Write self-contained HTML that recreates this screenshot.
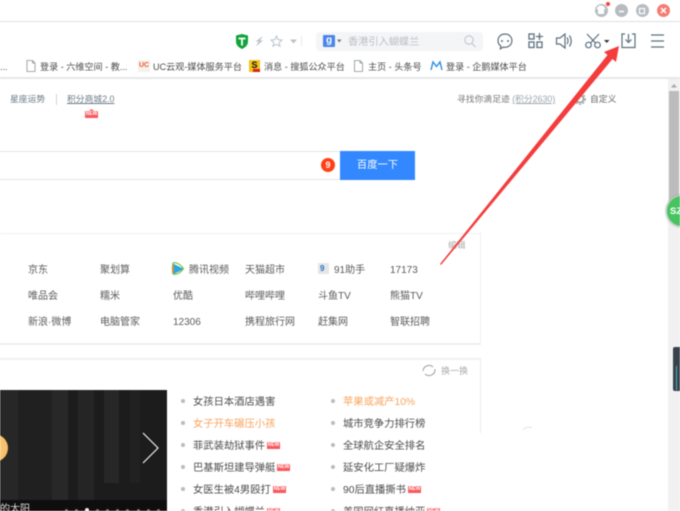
<!DOCTYPE html>
<html><head><meta charset="utf-8">
<style>
html,body{margin:0;padding:0;background:#fff}
#p{position:relative;width:680px;height:511px;overflow:hidden;background:#fff;font-family:"Liberation Sans","Noto Sans CJK SC",sans-serif;filter:blur(.45px)}
.t{position:absolute;white-space:nowrap;line-height:14px;height:14px;font-size:10px;color:#5c5c5c}
.b{font-size:9.1px;color:#4c4c4c}
.l{font-size:10.3px;color:#4c4c4c}
.l.o{color:#f9a45c}
.r{position:absolute}
.n{position:absolute;width:13px;height:7px;background:#f8585c;color:#fff;font-size:5px;line-height:7px;text-align:center;font-weight:bold}
.d{position:absolute;width:4px;height:4px;border-radius:50%;background:#bbb}
svg{position:absolute;left:0;top:0}
</style></head><body><div id="p">
<!-- chrome lines -->
<div class="r" style="left:0;top:21px;width:680px;height:1px;background:#dde0e7"></div>
<div class="r" style="left:0;top:77px;width:680px;height:2px;background:#e6e7ea"></div>
<!-- scrollbar -->
<div class="r" style="left:668px;top:79px;width:12px;height:432px;background:#f1f1f1"></div>
<div class="r" style="left:669px;top:91px;width:10px;height:112px;background:#bcbcbc"></div>
<div class="r" style="left:673px;top:347px;width:7px;height:44px;background:#39424a;border-radius:2px 0 0 2px"></div>
<div class="r" style="left:676px;top:366px;width:1px;height:24px;background:#4bb0c8"></div>
<div class="r" style="left:666px;top:195px;width:32px;height:32px;border-radius:50%;background:#47c460;border:1px solid #c9d2cb;box-sizing:border-box;box-shadow:0 0 2px #999"></div>
<div class="t" style="left:670px;top:205px;color:#fff;font-size:9.5px;font-weight:bold">SZ</div>
<!-- top window controls -->
<div class="r" style="left:595px;top:4px;width:13px;height:13px;border-radius:50%;background:#b6bcc2"></div>
<div class="r" style="left:615px;top:4px;width:13px;height:13px;border-radius:50%;background:#b6bcc2"></div>
<div class="r" style="left:636px;top:4px;width:13px;height:13px;border-radius:50%;background:#b6bcc2"></div>
<div class="r" style="left:657px;top:4px;width:13px;height:13px;border-radius:50%;background:#f47c74"></div>
<div class="r" style="left:606px;top:2px;width:4px;height:4px;border-radius:50%;background:#f4442e"></div>
<!-- search -->
<div class="r" style="left:316px;top:32px;width:167px;height:19px;border-radius:4px;background:#f3f5f7"></div>
<div class="r" style="left:323px;top:35px;width:12px;height:12px;background:#4a86e8;border-radius:1px;color:#fff;font-size:10px;line-height:12px;text-align:center;font-weight:bold">g</div>
<div class="t" style="left:348px;top:36px;color:#bcbfc3;font-size:10.2px">香港引入蝴蝶兰</div>
<!-- bookmarks -->
<div class="t b" style="left:0;top:60px">...</div>
<div class="t b" style="left:40px;top:60px">登录 - 六维空间 - 教...</div>
<div class="r" style="left:138px;top:60px;width:12px;height:12px;background:#f6f1ee;color:#e8632c;font-size:7px;line-height:12px;text-align:center;font-weight:bold">UC</div>
<div class="t b" style="left:153px;top:60px">UC云观-媒体服务平台</div>
<div class="r" style="left:249px;top:60px;width:11px;height:12px;background:#f2c418;color:#111;font-size:9px;line-height:11px;text-align:center;font-weight:bold">S</div>
<div class="r" style="left:253px;top:69px;width:7px;height:3px;background:#d9221c"></div>
<div class="t b" style="left:264px;top:60px">消息 - 搜狐公众平台</div>
<div class="t b" style="left:368px;top:60px">主页 - 头条号</div>
<div class="t b" style="left:446px;top:60px">登录 - 企鹅媒体平台</div>
<!-- header links -->
<div class="t" style="left:10px;top:92px;font-size:8.8px;color:#6b7b86">星座运势</div>
<div class="r" style="left:56px;top:94px;width:1px;height:11px;background:#d5d5d5"></div>
<div class="t" style="left:67px;top:92px;font-size:8.8px;color:#6b7b86;text-decoration:underline">积分商城2.0</div>
<div class="n" style="left:85px;top:111px">NEW</div>
<div class="t" style="left:457px;top:92px;font-size:8.8px;color:#777">寻找你滴足迹 <span style="text-decoration:underline;color:#9aa5ad">(积分2630)</span></div>
<div class="t" style="left:590px;top:92px;font-size:8.8px;color:#666">自定义</div>
<!-- search box -->
<div class="r" style="left:-2px;top:151px;width:343px;height:27px;border:1px solid #e4e4e4;box-sizing:content-box"></div>
<div class="r" style="left:321px;top:158px;width:14px;height:14px;border-radius:50%;background:#ff3f17;color:#fff;font-size:9px;line-height:14px;text-align:center;font-weight:bold">9</div>
<div class="r" style="left:340px;top:151px;width:75px;height:29px;background:#3388ff;color:#fff;font-size:10.3px;line-height:30px;text-align:center">百度一下</div>
<!-- card 1 -->
<div class="r" style="left:-2px;top:233px;width:481px;height:109px;border:1px solid #efefef;border-bottom-width:2px"></div>
<div class="t" style="left:448px;top:238px;font-size:8.8px;color:#aaa">编辑</div>
<div class="t" style="left:28px;top:264px">京东</div>
<div class="t" style="left:100px;top:264px">聚划算</div>
<div class="t" style="left:189px;top:264px">腾讯视频</div>
<div class="t" style="left:245px;top:264px">天猫超市</div>
<div class="r" style="left:318px;top:263px;width:11px;height:11px;background:#e6e6e6"></div>
<div class="t" style="left:320px;top:263px;font-size:8px;color:#2a6fc0;font-weight:bold;line-height:11px;height:11px">9</div>
<div class="t" style="left:334px;top:264px">91助手</div>
<div class="t" style="left:390px;top:264px">17173</div>
<div class="t" style="left:28px;top:290px">唯品会</div>
<div class="t" style="left:100px;top:290px">糯米</div>
<div class="t" style="left:173px;top:290px">优酷</div>
<div class="t" style="left:245px;top:290px">哔哩哔哩</div>
<div class="t" style="left:318px;top:290px">斗鱼TV</div>
<div class="t" style="left:390px;top:290px">熊猫TV</div>
<div class="t" style="left:28px;top:316px">新浪·微博</div>
<div class="t" style="left:100px;top:316px">电脑管家</div>
<div class="t" style="left:173px;top:316px">12306</div>
<div class="t" style="left:245px;top:316px">携程旅行网</div>
<div class="t" style="left:318px;top:316px">赶集网</div>
<div class="t" style="left:390px;top:316px">智联招聘</div>
<!-- card 2 -->
<div class="r" style="left:0;top:358px;width:480px;height:2px;background:#f0f0f0"></div>
<div class="r" style="left:480px;top:358px;width:1px;height:75px;background:#ececec"></div>
<div class="t" style="left:441px;top:364px;font-size:9px;color:#aaa">换一换</div>
<!-- image -->
<div class="r" style="left:0;top:390px;width:167px;height:121px;background:#1c1c1c;overflow:hidden">
<div class="r" style="left:0;top:0;width:18px;height:121px;background:#272727"></div>
<div class="r" style="left:18px;top:0;width:34px;height:121px;background:#202020"></div>
<div class="r" style="left:52px;top:0;width:16px;height:121px;background:#282828"></div>
<div class="r" style="left:78px;top:0;width:16px;height:121px;background:#252525"></div>
<div class="r" style="left:104px;top:0;width:15px;height:93px;background:#272727"></div>
<div class="r" style="left:130px;top:0;width:10px;height:93px;background:#212121"></div>
<div class="r" style="left:-20px;top:44px;width:28px;height:28px;border-radius:50%;background:radial-gradient(circle at 40% 50%,#fbd58a,#f5b658)"></div>
<div class="r" style="left:0;top:110px;width:167px;height:11px;background:#0e0e0e"></div>
</div>
<div class="t" style="left:0;top:503px;color:#ddd;font-size:10px">的太阳</div>
<div class="r" style="left:65px;top:509px;width:3px;height:3px;border-radius:50%;background:#777"></div>
<div class="r" style="left:75px;top:509px;width:3px;height:3px;border-radius:50%;background:#777"></div>
<div class="r" style="left:85px;top:508px;width:4px;height:4px;border-radius:50%;background:#eee"></div>
<div class="r" style="left:96px;top:509px;width:3px;height:3px;border-radius:50%;background:#777"></div>
<div class="r" style="left:106px;top:509px;width:3px;height:3px;border-radius:50%;background:#777"></div>
<div class="r" style="left:116px;top:509px;width:3px;height:3px;border-radius:50%;background:#777"></div>
<div class="r" style="left:126px;top:509px;width:3px;height:3px;border-radius:50%;background:#777"></div>
<div class="r" style="left:137px;top:509px;width:3px;height:3px;border-radius:50%;background:#777"></div>
<div class="r" style="left:147px;top:509px;width:3px;height:3px;border-radius:50%;background:#777"></div>
<div class="r" style="left:157px;top:509px;width:3px;height:3px;border-radius:50%;background:#777"></div>
<!-- news -->
<div class="d" style="left:181px;top:399px"></div>
<div class="d" style="left:181px;top:421px"></div>
<div class="d" style="left:181px;top:443px"></div>
<div class="d" style="left:181px;top:465px"></div>
<div class="d" style="left:181px;top:487px"></div>
<div class="d" style="left:181px;top:509px"></div>
<div class="d" style="left:331px;top:399px"></div>
<div class="d" style="left:331px;top:421px"></div>
<div class="d" style="left:331px;top:443px"></div>
<div class="d" style="left:331px;top:465px"></div>
<div class="d" style="left:331px;top:487px"></div>
<div class="d" style="left:331px;top:509px"></div>
<div class="t l" style="left:193px;top:396px">女孩日本酒店遇害</div>
<div class="t l o" style="left:193px;top:418px">女子开车碾压小孩</div>
<div class="t l" style="left:193px;top:440px">菲武装劫狱事件</div><div class="n" style="left:267px;top:442px">NEW</div>
<div class="t l" style="left:193px;top:462px">巴基斯坦建导弹艇</div><div class="n" style="left:277px;top:464px">NEW</div>
<div class="t l" style="left:193px;top:484px">女医生被4男殴打</div><div class="n" style="left:273px;top:486px">NEW</div>
<div class="t l" style="left:193px;top:506px">香港引入蝴蝶兰</div><div class="n" style="left:267px;top:508px">NEW</div>
<div class="t l o" style="left:343px;top:396px">苹果或减产10%</div>
<div class="t l" style="left:343px;top:418px">城市竞争力排行榜</div>
<div class="t l" style="left:343px;top:440px">全球航企安全排名</div>
<div class="t l" style="left:343px;top:462px">延安化工厂疑爆炸</div>
<div class="t l" style="left:343px;top:484px">90后直播撕书</div><div class="n" style="left:408px;top:486px">NEW</div>
<div class="t l" style="left:343px;top:506px">美国网红直播纳亚</div><div class="n" style="left:427px;top:508px">NEW</div>
<!-- icons and arrow -->
<svg width="680" height="511" viewBox="0 0 680 511" fill="none">
<!-- window control glyphs -->
<path d="M597.5 7l2-1.500h3l2 1.500 1 2-1.500.5V14h-6V9.500L596.500 9z" fill="#fff"/>
<path d="M619 11.500h5" stroke="#fff" stroke-width="1.500"/>
<rect x="639.500" y="8.500" width="5" height="5" stroke="#fff" stroke-width="1.200"/>
<path d="M661 8l5 5M666 8l-5 5" stroke="#fff" stroke-width="1.500"/>
<!-- shield -->
<path d="M236 35.500l6-1.500 6 1.500v6c0 4-3 6-6 7.500-3-1.500-6-3.500-6-7.500z" fill="#12a33a"/>
<path d="M238.500 38.500h7M242 38.500v7" stroke="#fff" stroke-width="1.800"/>
<!-- NEW peak -->
<path d="M89 111l2.500-2 2.500 2z" fill="#f8585c"/>
<!-- bolt, star, caret -->
<path d="M263 36l-7.500 5.500h3l-2.500 5 7-6h-3z" fill="#bcc3c8"/>
<path d="M276.500 36l1.600 3.600 3.900.4-2.900 2.500.9 3.800-3.500-2-3.500 2 .9-3.800-2.900-2.500 3.900-.4z" stroke="#bcc3c8"/>
<path d="M290 39.500h7l-3.500 4z" fill="#bcc3c8"/>
<path d="M301.500 36v10" stroke="#e8eaec"/>
<path d="M337 39.500h4.500l-2.250 3z" fill="#777"/>
<!-- magnifier -->
<circle cx="469" cy="40" r="4.200" stroke="#c4c8cc" stroke-width="1.100"/>
<path d="M472 43.500l3.500 3.500" stroke="#c4c8cc" stroke-width="1.200"/>
<!-- chat -->
<path d="M505 34c-4.100 0-7 2.900-7 6.600 0 2.300 1.100 4.200 2.900 5.400l-.6 2.800 3-1.700c.6.100 1.200.2 1.700.2 4 0 6.900-3 6.900-6.700S509 34 505 34z" stroke="#5d6f7d" stroke-width="1.200"/>
<circle cx="502" cy="41" r="1" fill="#5d6f7d"/><circle cx="508" cy="41" r="1" fill="#5d6f7d"/>
<!-- apps -->
<g stroke="#5d6f7d" stroke-width="1.300"><rect x="529" y="34" width="5" height="5"/><rect x="529" y="42" width="5" height="5.500"/><rect x="537" y="42" width="5" height="5.500"/><path d="M539.500 33v7M536 36.500h7"/></g>
<!-- speaker -->
<path d="M556.500 38v6h3.500l5 4V34l-5 4z" stroke="#5d6f7d" stroke-width="1.200"/>
<path d="M567 37.500c1.300 2 1.300 4.500 0 6.500M569.500 35.500c2.200 3.500 2.200 7.500 0 11" stroke="#5d6f7d" stroke-width="1.200"/>
<!-- scissors -->
<g stroke="#5d6f7d" stroke-width="1.200"><circle cx="588.500" cy="45" r="2.800"/><circle cx="597.500" cy="45" r="2.800"/><path d="M590.500 43L599 34M595.500 43L587 34"/></g>
<path d="M604 40h5.500l-2.750 3z" fill="#333"/>
<!-- download -->
<path d="M625 34h-3v13.500h13V34h-3" stroke="#5d6f7d" stroke-width="1.200"/>
<path d="M628.500 34v8.500M625.500 39.500l3 3 3-3" stroke="#5d6f7d" stroke-width="1.200"/>
<!-- menu -->
<path d="M651 35h13M651 41h13M651 47h13" stroke="#5d6f7d" stroke-width="1.200"/>
<!-- page icons -->
<path d="M27 60.500h5.500l2.500 2.500v8.500h-8zM32.500 60.500V63H35" stroke="#8a8f94" stroke-width=".8"/>
<path d="M354.500 60.500h5.500l2.500 2.500v8.500h-8zM360 60.500V63h2.500" stroke="#8a8f94" stroke-width=".8"/>
<path d="M431 70l2-8 3.500 4.500 3.500-4.500 2 8" stroke="#2b8fe0" stroke-width="1.400"/>
<!-- gear -->
<circle cx="580" cy="99" r="3.500" stroke="#777" stroke-width="1.100"/>
<circle cx="580" cy="99" r="5.200" stroke="#888" stroke-width="1.100" stroke-dasharray="2 1.500"/>
<!-- tencent video -->
<path d="M173 263.500l11 5.500-11 5.500z" fill="#2aa6e0"/>
<path d="M173 263c3-1.500 8 2 10.500 5.500-2 3.500-7 7-10.500 5.500-.8-3-.8-8 0-11z" stroke="#7fc241" stroke-width="1.200"/>
<path d="M173 265v8" stroke="#f28a2e" stroke-width="1.500"/>
<!-- refresh -->
<path d="M423 371a6 6 0 0 1 10-4M435 369a6 6 0 0 1-10 5" stroke="#9aa1a6" stroke-width="1"/>
<!-- chevron -->
<path d="M143 433l15 15-15 15" stroke="#eee" stroke-width="1.200"/>
<!-- faint arc -->
<path d="M523 430a7 7 0 0 1 9-2" stroke="#e3e3e3"/>
<!-- scrollbar up arrow -->
<path d="M671 87.500h6l-3-3.500z" fill="#a8a8a8"/>
<!-- red arrow -->
<path d="M440 264L607.500 55 604 52 619 46 616 62 612.500 59 441 265z" fill="#f43c3c"/>
</svg>
</div></body></html>
